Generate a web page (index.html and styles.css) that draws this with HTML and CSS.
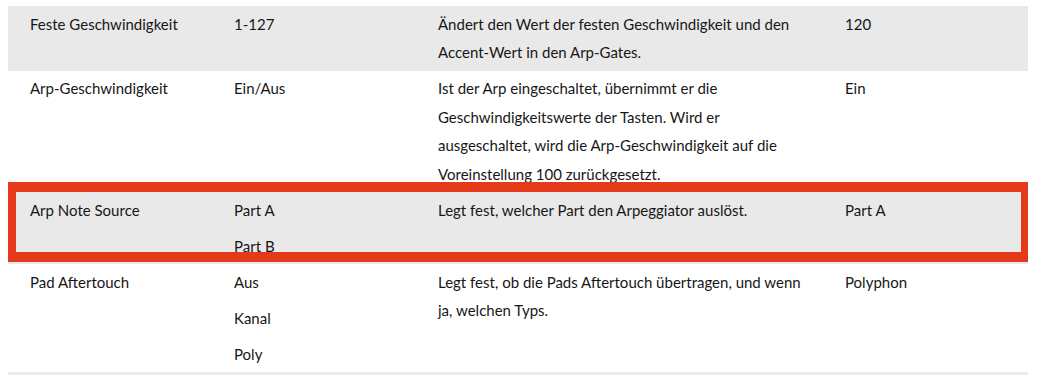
FILE: index.html
```html
<!DOCTYPE html>
<html>
    <head>
        <title>Arp-Einstellungen</title>
        <meta name="viewport" content="width=device-width, initial-scale=1.0">
        <link rel="stylesheet" href="styles.css">
    </head>
    <body>
        <div class="settings">
            <table class="settings-table">
                <colgroup>
                    <col class="col-name">
                    <col class="col-range">
                    <col class="col-desc">
                    <col class="col-default">
                </colgroup>
                <tbody>
                    <tr>
                        <td>Feste Geschwindigkeit</td>
                        <td><p>1-127</p></td>
                        <td class="desc">Ändert den Wert der festen Geschwindigkeit und den Accent-Wert in den Arp-Gates.</td>
                        <td>120</td>
                    </tr>
                    <tr>
                        <td>Arp-Geschwindigkeit</td>
                        <td><p>Ein/Aus</p></td>
                        <td class="desc">Ist der Arp eingeschaltet, übernimmt er die Geschwindigkeitswerte der Tasten. Wird er ausgeschaltet, wird die Arp-Geschwindigkeit auf die Voreinstellung 100 zurückgesetzt.</td>
                        <td>Ein</td>
                    </tr>
                    <tr>
                        <td>Arp Note Source</td>
                        <td><p>Part A</p><p>Part B</p></td>
                        <td class="desc">Legt fest, welcher Part den Arpeggiator auslöst.</td>
                        <td>Part A</td>
                    </tr>
                    <tr>
                        <td>Pad Aftertouch</td>
                        <td><p>Aus</p><p>Kanal</p><p>Poly</p></td>
                        <td class="desc">Legt fest, ob die Pads Aftertouch übertragen, und wenn ja, welchen Typs.</td>
                        <td>Polyphon</td>
                    </tr>
                </tbody>
            </table>
            <!-- marks the Arp Note Source row -->
            <div class="callout"></div>
        </div>
    </body>
</html>
```

FILE: styles.css
```css
body {
    margin: 6px 10px 0 8px;
    background: #fff;
    color: #171717;
    font-family: Lato, "Open Sans", sans-serif;
    font-size: 15px;
}
.settings {
    position: relative;
    width: 1020px;
}
.settings-table {
    width: 1020px;
    border-collapse: collapse;
    table-layout: fixed;
    border-bottom: 3px solid #ececec;
}
.col-name {
    width: 204px;
}
.col-range {
    width: 204px;
}
.col-desc {
    width: 407px;
}
.col-default {
    width: 205px;
}
.settings-table td {
    vertical-align: top;
    line-height: 28.5px;
    padding: 3.5px 12px 4px 22px;
}
.settings-table td.desc {
    padding-right: 15px;
}
.settings-table tr:nth-child(odd) {
    background: #e9e9e9;
}
.settings-table p {
    margin: 0;
}
.settings-table p + p {
    margin-top: 7.5px;
}
.callout {
    position: absolute;
    top: 176px;
    left: -2px;
    width: 1025px;
    height: 80px;
    box-sizing: border-box;
    border: 10px solid #e5391c;
}
```
